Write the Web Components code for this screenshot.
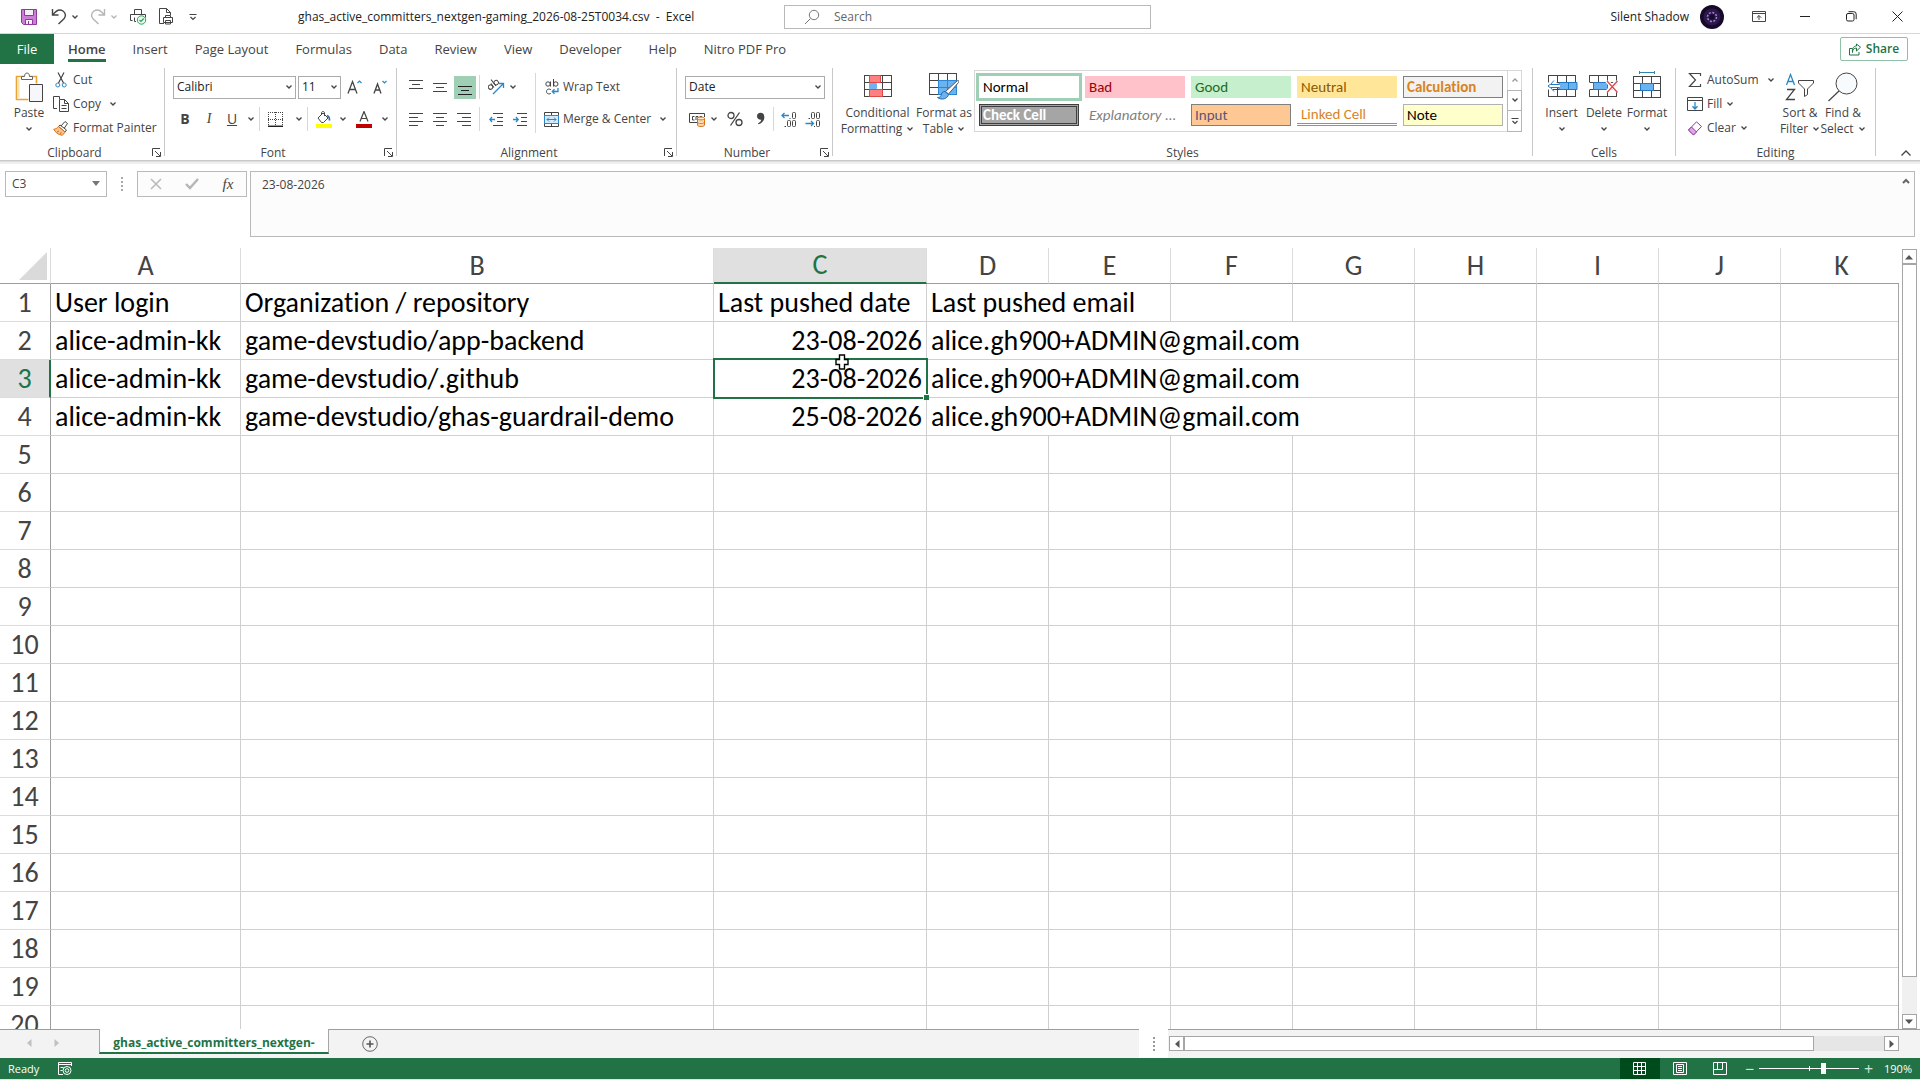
<!DOCTYPE html>
<html lang="en">
<head>
<meta charset="utf-8">
<title>ghas_active_committers_nextgen-gaming_2026-08-25T0034.csv - Excel</title>
<style>
  html, body { margin: 0; height: 100%; }
  body { font: 12px/16px "Open Sans", "Noto Sans", sans-serif; color: #444; background: #fff; overflow: hidden; font-variant-ligatures: none; }
</style>
</head>
<body>
<xl-app></xl-app>
<script>
const BASE = `
  *, *::before, *::after { box-sizing: border-box; }
  button, input, select, textarea { font: inherit; color: inherit; margin: 0; padding: 0; border: 0; border-radius: 0; background: none; outline: none; }
  button { display: flex; align-items: center; justify-content: center; white-space: nowrap; }
  select { appearance: none; }
`;

function define(name, css, html) {
  const template = document.createElement('template');
  customElements.define(name, class extends HTMLElement {
    connectedCallback() {
      if (this.shadowRoot) return;
      template.innerHTML = `<style>${BASE}${css}</style>` + (typeof html === 'function' ? html(this) : html);
      this.attachShadow({ mode: 'open' }).append(template.content.cloneNode(true));
    }
  });
}

/* Icons: [width, height, markup]. Strokes default to dark grey, 1px. */
const grid3 = '<path fill="#fff" d="M.5.5h27v21H.5z"/><path d="M.5.5h27v21H.5zM.5 7.5h27M.5 14.5h27M9.5.5v21M18.5.5v21"/>';
const ICONS = {
  chev: [8, 6, '<path stroke-width="1.3" d="M1.5 1.5 4 4l2.500-2.500"/>'],
  chevUp: [8, 6, '<path stroke-width="1.3" d="M1.500 4.500 4 2l2.500 2.500"/>'],
  chevUpBold: [8, 8, '<path stroke="#666" stroke-width="2" d="M1 6l3-3 3 3"/>'],
  caretUp: [12, 8, '<path stroke-width="1.3" d="M1.500 6.500 6 2l4.500 4.500"/>'],
  custom: [8, 8, '<path stroke-width="1.2" d="M.5 1.500h7M1.500 4 4 6.500 6.500 4"/>'],
  save: [16, 16, '<path fill="#c97fd4" stroke="#8c3a99" d="M.5.5h15v15H2.500l-2-2z"/><path fill="#f7edf9" stroke="#8c3a99" d="M3.500.5h9v6h-9zM4.500 10.500h7v5h-7z"/><path stroke="#8c3a99" d="M7.500 12v3"/>'],
  undo: [16, 17, '<path stroke-width="1.4" d="M1.500 1v6h6M1.800 6.800C5 2.500 9 1 12 3c3 2.200 3 5.500 1 7.800L7.500 16"/>'],
  redo: [16, 17, '<path stroke="#b5b5b5" stroke-width="1.400" d="M14.500 1v6h-6M14.200 6.800C11 2.500 7 1 4 3 1 5.200 1 8.500 3 10.800L8.500 16"/>'],
  print: [18, 17, '<path d="M5.500 6V1.500h7V6M7 13.500H5.500v-4M3.500 12.500h-2v-6h15v3M14 8.500h1"/><circle cx="12.500" cy="12" r="4.200" fill="#e9f7ee" stroke="#2ea35a"/><path stroke="#2ea35a" stroke-width="1.200" d="m10.500 12 1.500 1.500 2.700-3"/>'],
  printDoc: [15, 17, '<path d="M5 15.500H.5V.5h7l4 4V7M7.500.5v4h4"/><path fill="#fff" d="M6.500 10V7.500h5V10M4.500 14.500v-5h9v5zM6.500 12.500h5v3.500h-5z"/>'],
  search: [16, 16, '<circle cx="10" cy="6" r="4.700" stroke="#777"/><path stroke="#777" d="M6.500 9.500 1 15"/>'],
  ribbonOpt: [14, 12, '<path d="M.5.5h13v10H.5zM.5 2.500h13M7 9V4.500M4.800 6.700 7 4.500l2.200 2.200"/>'],
  min: [11, 11, '<path d="M0 5.500h10" stroke="#222"/>'],
  restore: [11, 11, '<rect x=".5" y="2.500" width="7.500" height="7.500" rx="1.500" stroke="#222"/><path stroke="#222" d="M2.500.7H7.500a2.500 2.500 0 0 1 2.700 2.500v5"/>'],
  close: [11, 11, '<path stroke="#222" d="m.5.5 10 10M10.500.5l-10 10"/>'],
  share: [12, 13, '<path stroke="#217346" d="M3.500 5.500H.5v6.500h9.500V9M3.500 9.500c0-3 1.500-4.500 4-4.500V8l4-3.800L7.500 1v2C4.500 3 3 5.500 3.500 9.500z"/>'],
  paste: [28, 30, '<path fill="#fff" stroke="#e8a33a" stroke-width="1.600" d="M1.500 4.500h20v23h-20z"/><path stroke="#fbe0a6" stroke-width="2" d="M3.500 6.500v19"/><path fill="#fff" stroke="#666" d="M6.500 7.500v-3h3c0-2 .8-3.500 2.500-3.500s2.500 1.500 2.500 3.500h3v3z"/><path fill="#fff" stroke="#fff" stroke-width="3" d="M15 13h12v16H15z"/><path fill="#f7f7fb" d="M14.500 12.500h13v17h-13z"/>'],
  cut: [12, 16, '<path stroke-width="1.200" d="M3 .5 8.500 11M9 .5 3.500 11"/><circle cx="2.800" cy="13" r="2" stroke="#2b88c8"/><circle cx="9.200" cy="13" r="2" stroke="#2b88c8"/>'],
  copy: [16, 16, '<path fill="#fff" d="M4 12.500H.5V.5h6V3"/><path fill="#fff" d="M6.500 3.500h5l4 4v8h-9zM11.500 3.500v4h4M8.500 9.500h5M8.500 12.500h5"/>'],
  painter: [16, 15, '<path d="m8 5 4-4.500 2.500 2L11 7.500"/><path fill="#fff" d="m5.500 5.500 1.500-1.500 6.500 5-1.500 2z"/><path fill="#f9c38a" stroke="#d9701a" d="M5.500 5.500C4.500 7 3 8 .8 8.200 2 11 5 13.500 9 14.300c1.500-1 2.500-2 3-3.300z"/><path stroke="#d9701a" d="M4 11l2-1M7 13l1.500-2"/>'],
  launcher: [9, 9, '<path d="M.5 8V.5H8M3 3l5 5M8.500 4v4.500H4"/>'],
  growA: [16, 16, '<path stroke-width="1.300" d="m1 14.500 4.500-12 4.500 12M2.500 10.500h6"/><path stroke="#2b88c8" stroke-width="1.200" d="m10.500 4 2-2 2 2"/>'],
  shrinkA: [16, 16, '<path stroke-width="1.300" d="m1 14.500 3.500-9.500L8 14.500M2.200 11h4.600"/><path stroke="#2b88c8" stroke-width="1.200" d="m9.500 2 2 2 2-2"/>'],
  borders: [15, 15, '<path stroke-dasharray="1 1" d="M0 .5h15M0 7.500h15M.5 0v15M7.500 0v15M14.500 0v15"/><path stroke="#222" stroke-width="1.500" d="M0 14.300h15"/>'],
  fill: [17, 17, '<path d="m3 7 5-5 5 5-4.500 4.500H6.500zM6.500 3.500V2c0-2 3-2 3 0v3" /><path stroke="#2b6ca8" stroke-width="1.700" d="M12 4.500c2 .5 2.500 2 2.500 5"/><path fill="#ffff00" stroke="none" d="M1 13h16v4H1z"/>'],
  fontColor: [16, 17, '<path stroke-width="1.200" d="m4 10.500 4-10 4 10M5.500 7.500h5"/><path fill="#c00000" stroke="none" d="M0 13h16v4H0z"/>'],
  vTop: [14, 16, '<path d="M0 1.500h14M3 5.500h8M0 9.500h14"/>'],
  vMid: [14, 16, '<path d="M0 4.500h14M3 8.500h8M0 12.500h14"/>'],
  vBot: [14, 16, '<path d="M0 7.500h14M3 11.500h8M0 15.500h14" stroke="#222"/>'],
  hLeft: [14, 14, '<path d="M0 1.500h14M0 5.500h9M0 9.500h14M0 13.500h9"/>'],
  hCenter: [14, 14, '<path d="M0 1.500h14M3 5.500h8M0 9.500h14M3 13.500h8"/>'],
  hRight: [14, 14, '<path d="M0 1.500h14M5 5.500h9M0 9.500h14M5 13.500h9"/>'],
  outdent: [14, 14, '<path d="M4 1.500h10M8 5.500h6M8 9.500h6M4 13.500h10"/><path stroke="#2b88c8" stroke-width="1.300" d="M6 7.500H.8M3 5 .8 7.500 3 10"/>'],
  indent: [14, 14, '<path d="M4 1.500h10M8 5.500h6M8 9.500h6M4 13.500h10"/><path stroke="#2b88c8" stroke-width="1.300" d="M0 7.500h5.200M3 5l2.200 2.500L3 10"/>'],
  orient: [17, 16, '<g transform="rotate(-38 5 8)"><circle cx="3" cy="6.500" r="2.200"/><path d="M5.500 4v5M8 1v8"/><circle cx="10.200" cy="6.500" r="2.200"/></g><path stroke="#2b88c8" stroke-width="1.300" d="M5 15 15.500 4.500M11 4.500h4.500V9"/>'],
  wrap: [14, 16, '<circle cx="3" cy="5" r="2.200"/><path d="M5.500 2.500v5M8.500 0v7.500M6 10.800c-2-1.500-4.500-.5-4.500 1.700s2.500 3.200 4.500 1.700"/><circle cx="10.800" cy="5" r="2.200"/><path stroke="#2b88c8" stroke-width="1.300" d="M13 9v3.500H7.500M9.500 10.300l-2.200 2.200 2.200 2.200"/>'],
  merge: [15, 15, '<path d="M.5.5h14v14H.5zM7.500.5v3M7.500 11.500v3"/><path fill="#d5eafa" stroke="#2b88c8" d="M.5 3.500h14v8H.5zM3 7.500h9M5 5.500l-2 2 2 2M10 5.500l2 2-2 2"/>'],
  currency: [17, 15, '<path d="M8 10.500H.5v-9h15V5M5.500 4.500h-2v3.500h2M7 8V4.500h2V6M13 4.500h-2V5.500"/><path fill="#fbd9a8" stroke="#d9701a" d="M8.500 6.500c0-2 7-2 7 0v6.500c0 2-7 2-7 0zM8.500 6.500c0 1.800 7 1.800 7 0M8.500 10c0 1.800 7 1.800 7 0"/>'],
  percent: [16, 16, '<circle cx="4" cy="4.500" r="3" stroke-width="1.300"/><circle cx="12" cy="11.500" r="3" stroke-width="1.300"/><path stroke-width="1.300" d="M12.500 1.500 3.500 14.500"/>'],
  comma: [10, 14, '<path fill="#444" stroke="none" d="M1 4.500a3.500 3.500 0 0 1 7.300 0c.3 3.500-1.800 6.500-5.800 7.800l-.5-1c2-.8 3-2 3.300-3.500C3 8 1 6.500 1 4.500z"/>'],
  incDec: [16, 15, '<rect x="11.500" y=".5" width="3" height="6" rx="1"/><rect x="6.500" y="8.500" width="3" height="6" rx="1"/><rect x="11.500" y="8.500" width="3" height="6" rx="1"/><path d="M3.500 14.500h1.500M8.500 6.500h1"/><path stroke="#2b88c8" stroke-width="1.300" d="M8 3.500H1M3.500 1 1 3.500 3.500 6"/>'],
  decDec: [16, 15, '<rect x="6.500" y=".5" width="3" height="6" rx="1"/><rect x="11.500" y=".5" width="3" height="6" rx="1"/><rect x="11.500" y="8.500" width="3" height="6" rx="1"/><path d="M3.500 6.500h1.500M9 14.500h1"/><path stroke="#2b88c8" stroke-width="1.300" d="M.5 11.500h8M6 9l2.500 2.500L6 14"/>'],
  condFmt: [28, 23, grid3 + '<path fill="#ff8080" stroke="#e04848" d="M5.500.5h11v7h-11zM5.500 14.500h13v7h-13z"/><path fill="#6fb3ee" stroke="#6fb3ee" d="M5.500 8.500h7v5h-7z"/>'],
  fmtTable: [30, 27, grid3 + '<path fill="#6cb2ee" stroke="#2b88d8" d="M9.500 7.500h18v14h-18z"/><path stroke="#2b88d8" d="M18.500 7.500v14M9.500 14.500h18"/><path fill="#fff" stroke="#555" d="M28 8c2-1.500 2 .5 1.500 1.500L19.500 21l-3-2.500z"/><path fill="#6cb2ee" stroke="#1f6db5" d="M16 18.500c-3 0-3.500 2-4 4-.5 1.500-2 2-3.500 2 4 3 10 1.500 11-3z"/>'],
  insert: [32, 23, '<g transform="translate(2)">' + grid3 + '</g><path fill="#6cb2ee" stroke="#1f7ac8" d="M13 7.500h18v7H13zM22.500 7.500v7"/><path fill="#fff" stroke="#fff" stroke-width="3" d="M1 11h13M7 5l-6 6 6 6"/><path stroke="#1f7ac8" fill="#fff" d="M13.500 9.500H4.500L8 5.500M4.500 12.500h9M4.500 12.500 8 16.500M4 9.500 2 11l2 1.500"/>'],
  del: [30, 23, grid3 + '<path stroke="#fff" stroke-width="2" d="M0 7.500v7M27.500 7v8"/><path fill="#6cb2ee" stroke="#1f7ac8" d="M4.500 7.500h14v7h-14z"/><path stroke="#fff" stroke-width="4" d="m18 6 10 11M28 6 18 17"/><path stroke="#e04848" stroke-width="1.300" d="m18 6 10.500 11.500M28.500 6 18 17.500"/>'],
  format: [28, 32, '<path stroke="#2b88a8" d="M6.500 1.500h15M6.500 0v3M21.500 0v3"/><g transform="translate(0 5)">' + grid3 + '<path fill="#6cb2ee" stroke="#1f7ac8" d="M7.500 7.500h13v7h-13z"/></g>'],
  sigma: [14, 16, '<path stroke-width="1.200" d="M12.500 4V1.500h-11L7.500 8l-6 6.500h11V12"/>'],
  fillDown: [16, 15, '<path d="M.5.5h15v13H.5zM.5 3.500h15"/><path stroke="#2b88c8" stroke-width="1.300" d="M8 5v7M5.500 9.300 8 12l2.500-2.700"/>'],
  eraser: [16, 15, '<path fill="#fff" stroke="#8c3a99" d="M9.500.8 14.500 5.500 6.500 13.800 1.500 9z"/><path fill="#e3a6ec" stroke="#8c3a99" d="M4.500 6 9.500 11l-3 3L1.500 9z"/>'],
  sort: [30, 28, '<path stroke="#2b88c8" stroke-width="1.300" d="m1.500 12 4-10.500 4 10.500M2.800 8.500h5.500"/><path stroke-width="1.300" d="M2 16.500h7.500L1.500 26.500H10"/><path fill="#fff" d="M13.500 7.500h15v2.500l-6 6v5.500l-3 2V16l-6-6z"/>'],
  find: [32, 30, '<circle cx="19.500" cy="11.500" r="10.500" fill="#f8fbfd"/><path stroke-width="1.200" d="M12 19 1.500 29"/>'],
  dropArrow: [8, 6, '<path fill="#777" stroke="none" d="M0 0h8L4 5z"/>'],
  cancel: [12, 12, '<path stroke="#bbb" stroke-width="1.600" d="m1 1 10 10M11 1 1 11"/>'],
  accept: [14, 12, '<path stroke="#b5b5b5" stroke-width="2.400" d="m1 6 4 4 8-9"/>'],
  left: [8, 10, '<path fill="currentColor" stroke="none" d="M6.500 1v8L2 5z"/>'],
  right: [8, 10, '<path fill="currentColor" stroke="none" d="M1.500 1v8L6 5z"/>'],
  up: [9, 6, '<path fill="currentColor" stroke="none" d="M0 5.500h8L4 1z"/>'],
  down: [9, 6, '<path fill="currentColor" stroke="none" d="M0 .5h8L4 5z"/>'],
  plus: [16, 16, '<circle cx="8" cy="8" r="7.300" stroke="#666"/><path stroke="#555" stroke-width="1.600" d="M8 4.500v7M4.500 8h7"/>'],
  macro: [14, 13, '<path stroke="#fff" d="M5 12.500H.5V.5h13V4M.5 2.500h13M2.500 5.500h3M2.500 8.500h2"/><circle cx="9" cy="8.500" r="4" stroke="#fff"/><circle cx="9" cy="8.500" r="1.800" stroke="#fff"/>'],
  viewNormal: [14, 14, '<path stroke="#fff" d="M.5.5h12v12H.5zM4.500.5v12M8.500.5v12M.5 4.500h12M.5 8.500h12"/>'],
  viewPage: [14, 14, '<path stroke="#fff" d="M.5.5h13v12H.5zM3.500 2.500h7v8h-7zM5 4.500h4M5 6.500h4M5 8.500h4"/>'],
  viewBreak: [14, 14, '<path stroke="#fff" d="M.5.5h13v12H.5zM4.500.5v7M9.500.5v7M.5 7.500h9"/>'],
  cursor: [14, 16, '<path fill="#fff" stroke="#000" stroke-width="1.400" d="M4.500 1h5v4.500H13v5H9.500V15h-5v-4.500H1v-5h3.500z"/>']
};

define('xl-icon', `:host { display: inline-flex; flex: none; } svg { display: block; fill: none; stroke: var(--ink, #444); }`, el => {
  const [w, h, body] = ICONS[el.getAttribute('name')];
  return `<svg width="${w}" height="${h}" viewBox="0 0 ${w} ${h}" aria-hidden="true">${body}</svg>`;
});
const icon = name => `<xl-icon name="${name}"></xl-icon>`;

define('xl-titlebar', `
  :host { display: grid; grid-template-columns: minmax(0, 1fr) 367px 769px; align-items: center; height: 34px; border-bottom: 1px solid #d6d6d6; }
  .left, .right, .qat { display: flex; align-items: center; }
  .qat { padding-left: 21px; }
  .qat button { height: 32px; justify-content: flex-start; }
  .wide { width: 30px; }
  .list { width: 24px; padding-left: 5px; }
  .slim { width: 15px; }
  .off { --ink: #b5b5b5; }
  .title { margin-left: 101px; color: #222; white-space: pre; }
  label { display: flex; align-items: center; gap: 14px; height: 24px; padding-left: 19px; border: 1px solid #b9b9b9; }
  input { flex: 1; min-width: 0; }
  input::placeholder { color: #666; opacity: 1; }
  .right { justify-content: flex-end; }
  .user { gap: 11px; color: #222; margin-right: 12px; }
  .win { width: 46px; height: 32px; }
`, `
  <div class="left">
    <div class="qat">
      <button class="wide" aria-label="Save">${icon('save')}</button>
      <button class="slim" aria-label="Undo">${icon('undo')}</button>
      <button class="list" aria-label="Undo list">${icon('chev')}</button>
      <button class="slim" aria-label="Redo">${icon('redo')}</button>
      <button class="list off" aria-label="Redo list">${icon('chev')}</button>
      <button class="wide" aria-label="Quick print">${icon('print')}</button>
      <button class="wide" aria-label="Print preview">${icon('printDoc')}</button>
      <button aria-label="Customise toolbar">${icon('custom')}</button>
    </div>
    <span class="title">ghas_active_committers_nextgen-gaming_2026-08-25T0034.csv  -  Excel</span>
  </div>
  <label>${icon('search')}<input type="search" placeholder="Search" aria-label="Search"></label>
  <div class="right">
    <button class="user"><span>Silent Shadow</span>
      <svg width="24" height="24" viewBox="0 0 24 24" aria-hidden="true"><circle cx="12" cy="12" r="12" fill="#150a28"/><circle cx="12" cy="12" r="8.500" fill="#2e174c"/><circle cx="12" cy="12" r="4.500" fill="none" stroke="#a184d6" stroke-width="1.500" stroke-dasharray="2 1.500"/><circle cx="12" cy="12" r="2.500" fill="#150a28"/></svg>
    </button>
    <button class="win" aria-label="Ribbon display options">${icon('ribbonOpt')}</button>
    <button class="win" aria-label="Minimise">${icon('min')}</button>
    <button class="win" aria-label="Restore">${icon('restore')}</button>
    <button class="win" aria-label="Close">${icon('close')}</button>
  </div>
`);

define('xl-tabs', `
  :host { display: flex; height: 30px; align-items: stretch; font-size: 13px; }
  button { padding: 0 13px 0 14px; position: relative; }
  .file { width: 54px; padding: 0; background: #217346; color: #fff; }
  .on { font-weight: 600; }
  .on::after { content: ""; position: absolute; left: 14px; right: 13px; bottom: 2px; height: 3px; background: #217346; }
  .share { margin: 3px 12px 3px auto; width: 68px; padding: 0; gap: 5px; border: 1px solid #8fbfa5; border-radius: 2px; color: #217346; font-weight: 600; font-size: 12px; }
`, `
  <button class="file">File</button><button class="on">Home</button>
  ${['Insert', 'Page Layout', 'Formulas', 'Data', 'Review', 'View', 'Developer', 'Help', 'Nitro PDF Pro'].map(t => `<button>${t}</button>`).join('')}
  <button class="share">${icon('share')}Share</button>
`);

define('xl-group', `
  :host { display: flex; flex: none; width: var(--group-w); }
  .col { flex: 1; min-width: 0; display: flex; flex-direction: column; padding-top: 4px; }
  .body { flex: 1; display: flex; }
  footer { display: flex; height: 15px; align-items: center; }
  footer span { flex: 1; text-align: center; }
  footer button { width: 15px; height: 15px; }
  .line { width: 1px; margin: 4px 0; background: #c8c8c8; }
`, el => `
  <div class="col"><div class="body"><slot></slot></div>
  <footer><span>${el.getAttribute('label')}</span>${el.hasAttribute('launcher') ? `<button aria-label="${el.getAttribute('label')} settings">${icon('launcher')}</button>` : ''}</footer></div>
  <div class="line"></div>
`);

define('xl-combo', `
  :host { display: grid; flex: none; width: var(--combo-w); height: 23px; border: 1px solid #ababab; align-items: center; color: #222; }
  select, xl-icon { grid-area: 1 / 1; }
  select { width: 100%; height: 100%; padding-left: 3px; }
  xl-icon { justify-self: end; margin-right: 2px; pointer-events: none; }
`, el => `<select aria-label="${el.getAttribute('label')}"><option>${el.getAttribute('value')}</option></select>${icon('chev')}`);

/* Tall command: picture above, caption of one or two lines below. */
define('xl-big', `
  :host { display: block; flex: none; width: var(--big-w); }
  button { width: 100%; flex-direction: column; justify-content: flex-start; }
  .pic { height: 37px; display: flex; align-items: center; justify-content: center; }
  .row { display: flex; align-items: center; gap: 4px; height: 16px; }
`, el => {
  const second = el.getAttribute('second');
  return `<button><span class="pic">${icon(el.getAttribute('icon'))}</span><span class="row">${el.getAttribute('label')}</span><span class="row">${second ? second : ''}${icon('chev')}</span></button>`;
});

/* Small command: picture with an optional caption and drop-down mark. */
define('xl-cmd', `
  :host { display: block; flex: none; width: var(--cmd-w, 24px); }
  button { width: 100%; height: 24px; justify-content: var(--cmd-justify, center); gap: 4px; }
  .pic { width: var(--pic, auto); display: flex; justify-content: center; }
  .gap { width: var(--gap, 0px); margin-left: -4px; }
  :host([on]) button { background: #9fd0b5; height: 23px; width: 22px; }
`, el => {
  const label = el.getAttribute('label'), name = el.getAttribute('icon');
  return `<button aria-label="${label || el.getAttribute('tip')}">${name ? `<span class="pic">${icon(name)}</span>` : '<slot></slot>'}${label ? `<span>${label}</span>` : ''}${el.hasAttribute('drop') ? '<span class="gap"></span>' + icon('chev') : ''}</button>`;
});

define('xl-gallery', `
  :host { display: flex; height: 62px; border: 1px solid #d8d8d8; border-right: 0; font: 15px/18px Carlito, Lato, sans-serif; font-variant-ligatures: none; }
  .tiles { display: grid; grid-template-columns: repeat(5, 100px); grid-auto-rows: 22px; gap: 6px; padding: 5px 4px; }
  .tiles button { justify-content: flex-start; padding-left: 4px; outline-offset: 0; }
  .tiles .normal { color: #000; outline: 3px solid #9fd0b5; }
  .bad { background: #ffc2ca; color: #9c0006; }
  .good { background: #c6efce; color: #1d6b1d; }
  .neutral { background: #ffe699; color: #8a5a00; }
  .calc { background: #f2f2f2; color: #d8831f; font-weight: 700; border: 1px solid #7f7f7f; }
  .check { background: #a5a5a5; color: #fff; font-weight: 700; border: 3px double #3f3f3f; }
  .expl { color: #7f7f7f; font-style: italic; }
  .input { background: #fdc894; color: #5d5578; border: 1px solid #7f7f7f; }
  .linked { color: #d8831f; border-bottom: 3px double #d8831f; }
  .note { background: #ffffcc; color: #000; border: 1px solid #b2b2b2; }
  .tiles .check { padding-left: 1px; }
  .tiles .calc, .tiles .input, .tiles .note { padding-left: 3px; }
  .scroll { display: grid; grid-template-rows: 1fr 1fr 1fr; width: 15px; margin: -1px 0; }
  .scroll button { border: 1px solid #b5b5b5; margin-top: -1px; }
  .scroll button:first-child { border-color: #d8d8d8; margin-top: 0; --ink: #999; }
`, `
  <div class="tiles">
    <button class="normal">Normal</button><button class="bad">Bad</button><button class="good">Good</button><button class="neutral">Neutral</button><button class="calc">Calculation</button>
    <button class="check">Check Cell</button><button class="expl">Explanatory ...</button><button class="input">Input</button><button class="linked">Linked Cell</button><button class="note">Note</button>
  </div>
  <div class="scroll"><button aria-label="Previous styles">${icon('chevUp')}</button><button aria-label="Next styles">${icon('chev')}</button><button aria-label="All styles">${icon('custom')}</button></div>
`);

define('xl-ribbon', `
  :host { display: flex; height: 100px; padding-bottom: 4px; background: linear-gradient(#c9c9c9 0 1px, #dcdcdc 1px 2px, #f0f0f0 2px 4px) bottom / 100% 4px no-repeat; }
  .stack { display: flex; flex-direction: column; --cmd-justify: flex-start; --pic: 16px; }
  .two { display: flex; flex-direction: column; gap: 8px; padding-top: 7px; }
  .row { display: flex; align-items: center; height: 24px; }
  .sep { width: 1px; height: 24px; background: #d8d8d8; }
  .gutter { margin: 0 7px 0 3px; }
  .tall { width: 1px; height: 60px; margin-top: 5px; background: #d8d8d8; }
  .end { margin-left: auto; align-self: flex-end; width: 28px; height: 14px; }
  b, i, u { font-size: 14px; line-height: 16px; }
  i { font-family: "Liberation Serif", serif; }
`, `
  <xl-group label="Clipboard" launcher style="--group-w:165px">
    <xl-big icon="paste" label="Paste" style="--big-w:46px;padding-left:12px"></xl-big>
    <div class="stack" style="--cmd-w:108px;padding-left:7px">
      <xl-cmd icon="cut" label="Cut"></xl-cmd><xl-cmd icon="copy" label="Copy" drop style="--gap:4px"></xl-cmd><xl-cmd icon="painter" label="Format Painter"></xl-cmd>
    </div>
  </xl-group>
  <xl-group label="Font" launcher style="--group-w:232px">
    <div class="two" style="padding-left:8px">
      <div class="row"><xl-combo label="Font" value="Calibri" style="--combo-w:123px"></xl-combo><xl-combo label="Font size" value="11" style="--combo-w:43px;margin-left:2px"></xl-combo><xl-cmd tip="Increase font size" icon="growA" style="--cmd-w:28px"></xl-cmd><xl-cmd tip="Decrease font size" icon="shrinkA"></xl-cmd></div>
      <div class="row"><xl-cmd tip="Bold"><b>B</b></xl-cmd><xl-cmd tip="Italic"><i>I</i></xl-cmd><xl-cmd tip="Underline" style="--cmd-w:22px"><u>U</u></xl-cmd><xl-cmd tip="Underline styles" icon="chev" style="--cmd-w:16px"></xl-cmd><span class="sep"></span><xl-cmd tip="Borders" icon="borders" style="--cmd-w:30px"></xl-cmd><xl-cmd tip="Border styles" icon="chev" style="--cmd-w:17px"></xl-cmd><span class="sep"></span><xl-cmd tip="Fill colour" icon="fill" style="--cmd-w:30px"></xl-cmd><xl-cmd tip="Fill colours" icon="chev" style="--cmd-w:10px"></xl-cmd><xl-cmd tip="Font colour" icon="fontColor" style="--cmd-w:32px"></xl-cmd><xl-cmd tip="Font colours" icon="chev" style="--cmd-w:10px"></xl-cmd></div>
    </div>
  </xl-group>
  <xl-group label="Alignment" launcher style="--group-w:280px">
    <div class="two" style="padding-left:7px">
      <div class="row"><xl-cmd tip="Top align" icon="vTop"></xl-cmd><xl-cmd tip="Middle align" icon="vMid"></xl-cmd><xl-cmd on tip="Bottom align" icon="vBot" style="padding-left:2px"></xl-cmd><span class="sep gutter"></span><xl-cmd tip="Orientation" icon="orient" drop style="--cmd-w:30px"></xl-cmd></div>
      <div class="row"><xl-cmd tip="Align left" icon="hLeft"></xl-cmd><xl-cmd tip="Centre" icon="hCenter"></xl-cmd><xl-cmd tip="Align right" icon="hRight"></xl-cmd><span class="sep gutter"></span><xl-cmd tip="Decrease indent" icon="outdent" style="--cmd-w:18px"></xl-cmd><xl-cmd tip="Increase indent" icon="indent" style="--cmd-w:30px"></xl-cmd></div>
    </div>
    <span class="tall"></span>
    <div class="two" style="padding-left:8px;--cmd-justify:flex-start;--cmd-w:128px;--pic:15px">
      <div class="row"><xl-cmd icon="wrap" label="Wrap Text"></xl-cmd></div>
      <div class="row"><xl-cmd icon="merge" label="Merge &amp; Center" drop style="--gap:4px"></xl-cmd></div>
    </div>
  </xl-group>
  <xl-group label="Number" launcher style="--group-w:156px">
    <div class="two" style="padding-left:8px">
      <div class="row"><xl-combo label="Number format" value="Date" style="--combo-w:140px"></xl-combo></div>
      <div class="row"><xl-cmd tip="Accounting format" icon="currency" drop style="--cmd-w:36px"></xl-cmd><xl-cmd tip="Percent" icon="percent" style="--cmd-w:28px"></xl-cmd><xl-cmd tip="Comma" icon="comma"></xl-cmd><span class="sep"></span><xl-cmd tip="Increase decimal" icon="incDec" style="--cmd-w:30px"></xl-cmd><xl-cmd tip="Decrease decimal" icon="decDec" style="--cmd-w:18px"></xl-cmd></div>
    </div>
  </xl-group>
  <xl-group label="Styles" style="--group-w:700px">
    <xl-big icon="condFmt" label="Conditional" second="Formatting" style="--big-w:76px;padding-left:13px"></xl-big>
    <xl-big icon="fmtTable" label="Format as" second="Table" style="--big-w:65px;padding-left:5px"></xl-big>
    <xl-gallery style="margin-top:2px"></xl-gallery>
  </xl-group>
  <xl-group label="Cells" style="--group-w:143px">
    <xl-big icon="insert" label="Insert" style="--big-w:50px;padding-left:7px"></xl-big>
    <xl-big icon="del" label="Delete" style="--big-w:42px"></xl-big>
    <xl-big icon="format" label="Format" style="--big-w:44px"></xl-big>
  </xl-group>
  <xl-group label="Editing" style="--group-w:200px">
    <div class="stack" style="--cmd-w:92px;padding-left:11px">
      <xl-cmd icon="sigma" label="AutoSum" drop style="--gap:4px"></xl-cmd><xl-cmd icon="fillDown" label="Fill" drop></xl-cmd><xl-cmd icon="eraser" label="Clear" drop></xl-cmd>
    </div>
    <xl-big icon="sort" label="Sort &amp;" second="Filter" style="--big-w:42px"></xl-big>
    <xl-big icon="find" label="Find &amp;" second="Select" style="--big-w:44px"></xl-big>
  </xl-group>
  <button class="end" aria-label="Collapse ribbon">${icon('caretUp')}</button>
`);

define('xl-formula-bar', `
  :host { display: flex; align-items: flex-start; height: 84px; padding: 7px 5px 0; }
  .name { display: flex; align-items: center; width: 102px; height: 26px; border: 1px solid #b9b9b9; padding: 0 6px; }
  .name input { flex: 1; min-width: 0; }
  .dots { width: 30px; height: 26px; display: flex; flex-direction: column; gap: 2px; align-items: center; justify-content: center; }
  .dots s { width: 2px; height: 2px; background: #aaa; }
  .acts { display: flex; width: 110px; height: 26px; border: 1px solid #b9b9b9; background: #fcfcfc; }
  .acts button { flex: 1; }
  .acts i { font: italic 15px/16px "Liberation Serif", serif; }
  .box { flex: 1; display: flex; align-items: flex-start; height: 66px; margin-left: 3px; border: 1px solid #b9b9b9; background: #fcfcfc; padding: 5px 4px 0 11px; }
  textarea { flex: 1; resize: none; height: 56px; overflow: hidden; }
`, `
  <div class="name"><input value="C3" aria-label="Name box">${icon('dropArrow')}</div>
  <div class="dots"><s></s><s></s><s></s><s></s></div>
  <div class="acts"><button aria-label="Cancel">${icon('cancel')}</button><button aria-label="Enter">${icon('accept')}</button><button aria-label="Insert function"><i>fx</i></button></div>
  <div class="box"><textarea aria-label="Formula bar">23-08-2026</textarea><button aria-label="Collapse formula bar">${icon('chevUpBold')}</button></div>
`);

const COLS = [['A', 190], ['B', 473], ['C', 213], ...'DEFGHIJK'.split('').map(c => [c, 122])];
const MAIL = 'alice.gh900+ADMIN@gmail.com';
const DATA = [
  ['User login', 'Organization / repository', 'Last pushed date', 'Last pushed email'],
  ['alice-admin-kk', 'game-devstudio/app-backend', '23-08-2026', MAIL],
  ['alice-admin-kk', 'game-devstudio/.github', '23-08-2026', MAIL],
  ['alice-admin-kk', 'game-devstudio/ghas-guardrail-demo', '25-08-2026', MAIL]
];
define('xl-grid', `
  :host { display: block; flex: 1; min-width: 0; overflow: hidden; position: relative; font: 28px/34px Carlito, Lato, sans-serif; font-variant-ligatures: none; color: #000; }
  .frame { position: absolute; inset: 36px 0 0 auto; width: 1px; background: #a6a6a6; }
  table { table-layout: fixed; border-collapse: separate; border-spacing: 0; }
  th { font-weight: 400; color: #444; padding: 1px 0 0; }
  thead th { height: 36px; border-bottom: 1px solid #9d9d9d; border-right: 1px solid #dcdcdc; }
  thead th.on { background: #e0e0e0; color: #217346; border-bottom: 2px solid #217346; padding: 0; }
  tbody th { border-right: 1px solid #9d9d9d; border-bottom: 1px solid #dcdcdc; padding-right: 1px; }
  tbody th.on { background: #e0e0e0; color: #217346; border-right: 2px solid #217346; padding-right: 0; }
  td { height: 38px; padding: 1px 4px 0; border-right: 1px solid #d0d0d0; border-bottom: 1px solid #d0d0d0; white-space: nowrap; }
  .num { text-align: right; }
  .sel { position: relative; }
  .sel::before { content: ""; position: absolute; inset: -2px -2px -2px -1px; border: 2px solid #217346; }
  .sel::after { content: ""; position: absolute; right: -3px; bottom: -3px; width: 6px; height: 6px; background: #217346; border: solid #fff; border-width: 1px 0 0 1px; }
  .cursor { position: absolute; left: 121px; top: -6px; z-index: 1; }
  .corner { display: flex; justify-content: flex-end; padding: 0 3px 0 0; }
`, () => {
  const head = COLS.map(([c]) => `<th scope="col" class="${c === 'C' ? 'on' : ''}">${c}</th>`).join('');
  const cells = r => {
    const row = DATA[r];
    if (!row) return '<td></td>'.repeat(11);
    const span = r ? 4 : 2;
    return `<td>${row[0]}</td><td>${row[1]}</td><td class="${r ? 'num' : ''} ${r === 2 ? 'sel' : ''}">${row[2]}${r === 2 ? `<xl-icon class="cursor" name="cursor"></xl-icon>` : ''}</td><td colspan="${span}">${row[3]}</td>` + '<td></td>'.repeat(8 - span);
  };
  const rows = Array.from({ length: 20 }, (_, r) => `<tr><th scope="row" class="${r === 2 ? 'on' : ''}">${r + 1}</th>${cells(r)}</tr>`).join('');
  return `<table style="width:${51 + COLS.reduce((s, c) => s + c[1], 0)}px"><colgroup><col style="width:51px">${COLS.map(c => `<col style="width:${c[1]}px">`).join('')}</colgroup>
    <thead><tr><th><div class="corner"><svg width="28" height="28" viewBox="0 0 28 28" aria-hidden="true"><path d="M28 0v28H0z" fill="#dadada"/></svg></div></th>${head}</tr></thead><tbody>${rows}</tbody></table><div class="frame"></div>`;
});

define('xl-scroll', `
  :host { display: flex; color: #555; background: #f0f0f0; }
  :host([dir=v]) { flex-direction: column; width: 15px; }
  :host([dir=h]) { height: 15px; background: #e6e6e6; }
  button { flex: none; width: 15px; height: 15px; border: 1px solid #a6a6a6; background: #fff; }
  .thumb { background: #fff; border: 1px solid #a6a6a6; }
  .rest { flex: 1; }
`, el => {
  const v = el.getAttribute('dir') === 'v';
  return `<button aria-label="Back">${icon(v ? 'up' : 'left')}</button><div class="thumb" style="flex:${v ? 19 : 9}"></div><div class="rest"></div><button aria-label="Forward">${icon(v ? 'down' : 'right')}</button>`;
});

define('xl-sheet-bar', `
  :host { display: flex; height: 29px; background: #f3f3f3; border-top: 1px solid #9d9d9d; color: #c0c0c0; }
  nav { display: flex; padding-left: 15px; }
  nav button { width: 28px; height: 26px; }
  .tab { margin: -1px 0 4px 28px; width: 230px; padding-top: 5px; border: 1px solid #a6a6a6; border-top: 0; border-bottom: 2px solid #217346; background: #fff; color: #217346; font-weight: 700; }
  .add { width: 82px; height: 27px; }
  .dots { width: 29px; margin: -1px 1px 0 auto; padding-top: 1px; background: #fff; display: flex; flex-direction: column; gap: 2px; align-items: center; justify-content: center; }
  .dots s { width: 2px; height: 2px; background: #999; }
  xl-scroll { width: 38%; margin: 6px 21px 0 0; }
`, `
  <nav><button aria-label="Previous sheet">${icon('left')}</button><button aria-label="Next sheet">${icon('right')}</button></nav>
  <button class="tab">ghas_active_committers_nextgen-</button>
  <button class="add" aria-label="New sheet">${icon('plus')}</button>
  <div class="dots"><s></s><s></s><s></s><s></s></div>
  <xl-scroll dir="h"></xl-scroll>
`);

define('xl-status-bar', `
  :host { display: flex; align-items: center; height: 22px; background: #217346; border-bottom: 1px solid #c9f2d8; color: #fff; font-size: 11px; padding: 0 8px; }
  .rec { width: 51px; height: 21px; }
  .view { width: 40px; height: 21px; }
  .view.on { background: #004b1c; }
  .first { margin-left: auto; }
  .step { width: 19px; height: 21px; font-size: 16px; color: #cfe5d8; }
  input { appearance: none; width: 100px; height: 21px; background: linear-gradient(#fff, #fff) center / 100% 1px no-repeat, linear-gradient(#fff, #fff) center / 1px 5px no-repeat; }
  input::-webkit-slider-thumb { appearance: none; width: 5px; height: 11px; background: #fff; }
  .zoom { width: 34px; justify-content: flex-end; }
`, `
  <span>Ready</span><button class="rec" aria-label="Record macro">${icon('macro')}</button>
  <button class="view on first" aria-label="Normal view">${icon('viewNormal')}</button><button class="view" aria-label="Page layout">${icon('viewPage')}</button><button class="view" aria-label="Page break preview">${icon('viewBreak')}</button>
  <button class="step" aria-label="Zoom out">−</button><input type="range" min="0" max="100" value="65" aria-label="Zoom"><button class="step" aria-label="Zoom in">+</button><button class="zoom">190%</button>
`);

define('xl-app', `
  :host { display: flex; flex-direction: column; height: 100vh; }
  main { flex: 1; min-height: 0; display: flex; }
  xl-scroll { margin: 1px 3px 0 3px; }
`, `
  <xl-titlebar></xl-titlebar><xl-tabs></xl-tabs><xl-ribbon></xl-ribbon><xl-formula-bar></xl-formula-bar>
  <main><xl-grid></xl-grid><xl-scroll dir="v"></xl-scroll></main>
  <xl-sheet-bar></xl-sheet-bar><xl-status-bar></xl-status-bar>
`);
</script>
</body>
</html>
